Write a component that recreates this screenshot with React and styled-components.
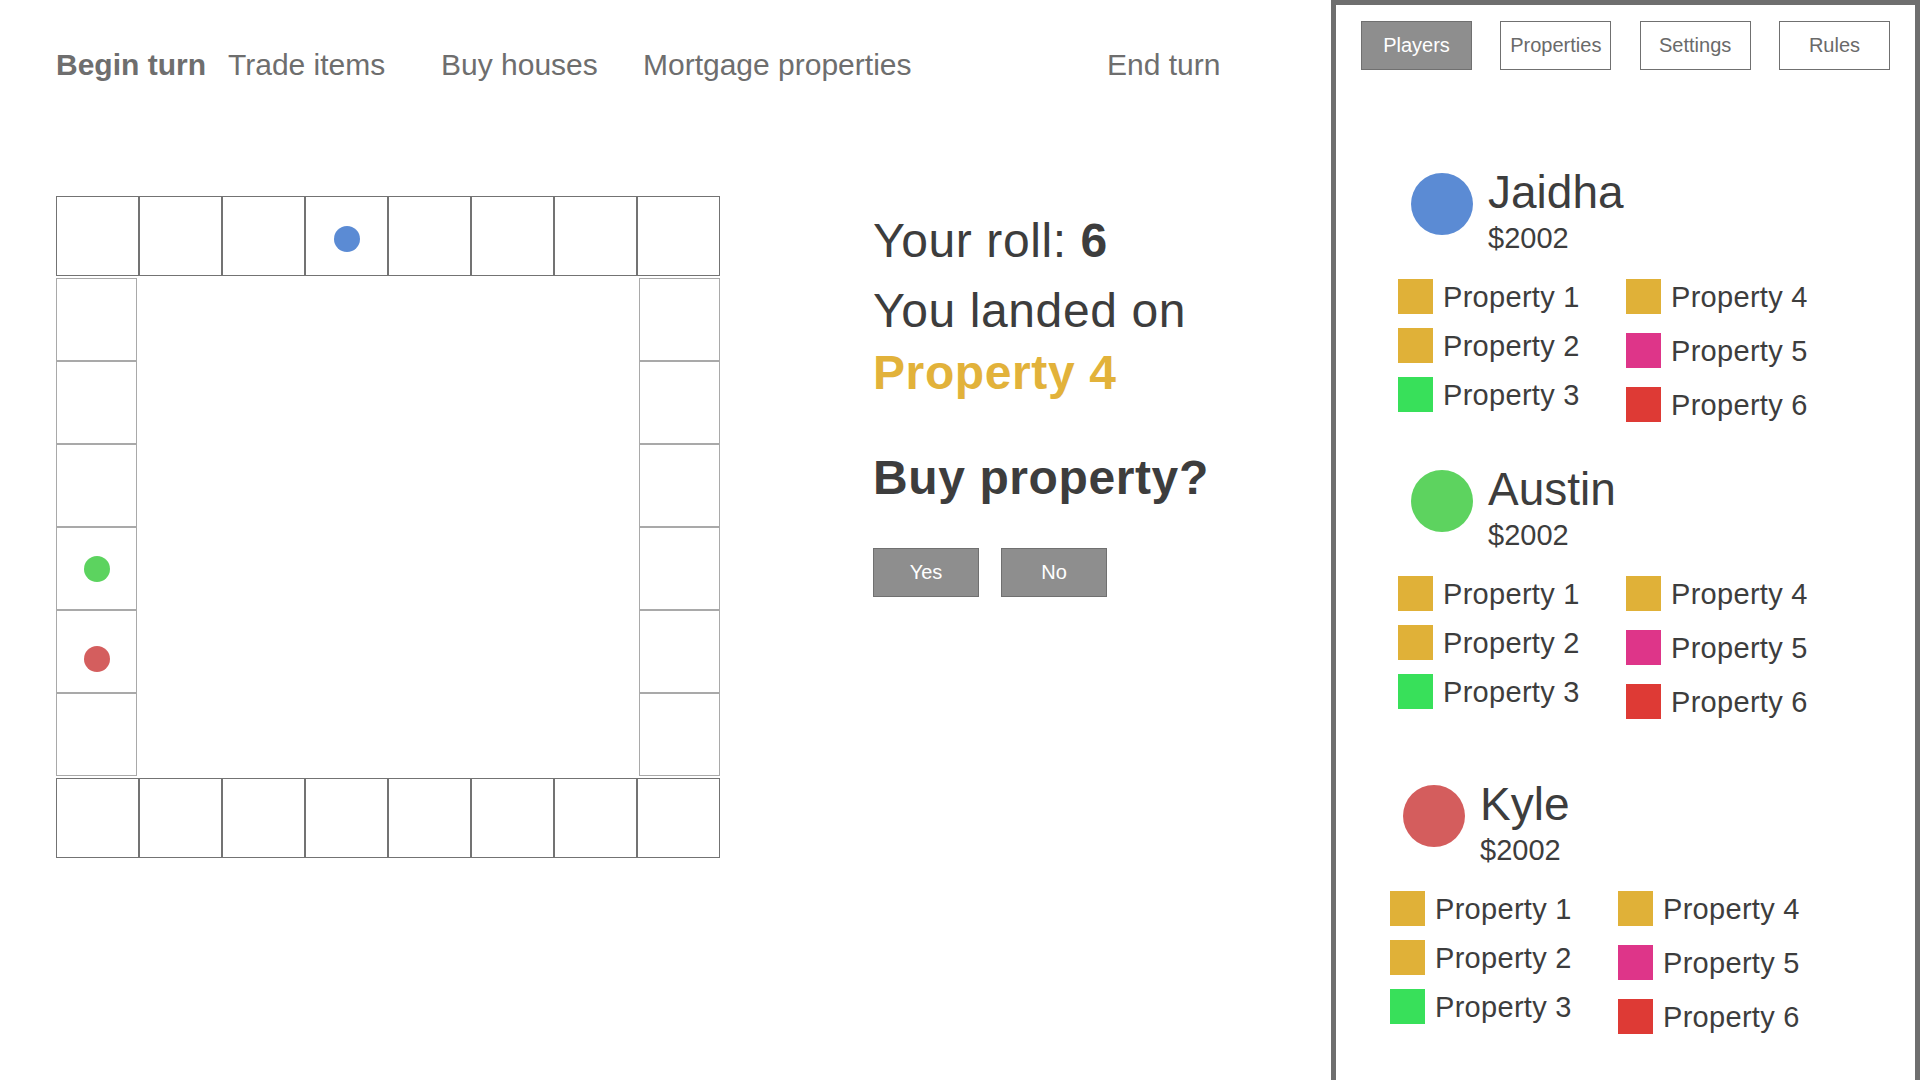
import React from 'react'
import styled, { createGlobalStyle } from 'styled-components'

const GlobalStyle = createGlobalStyle`
    html, body {
        margin: 0;
        padding: 0;
        overflow: hidden;
        background: #fff;
    }
    * {
        box-sizing: border-box;
    }
    body {
        font-family: 'Liberation Sans', Arial, sans-serif;
        color: #3d3d3d;
    }
`

const YELLOW = '#e0b138'
const PINK = '#de3589'
const GREEN = '#38e05a'
const RED = '#de3a35'

const navItems = [
    { label: 'Begin turn', bold: true },
    { label: 'Trade items' },
    { label: 'Buy houses' },
    { label: 'Mortgage properties' },
    { label: 'End turn' },
]

const tabs = ['Players', 'Properties', 'Settings', 'Rules']

const players = [
    { name: 'Jaidha', money: '$2002', color: '#5b8bd4' },
    { name: 'Austin', money: '$2002', color: '#5dd35f' },
    { name: 'Kyle', money: '$2002', color: '#d45d5d', shift: -8, extraTop: 18 },
]

const leftProps = [
    { label: 'Property 1', color: YELLOW },
    { label: 'Property 2', color: YELLOW },
    { label: 'Property 3', color: GREEN },
]

const rightProps = [
    { label: 'Property 4', color: YELLOW },
    { label: 'Property 5', color: PINK },
    { label: 'Property 6', color: RED },
]

// tokens on the board: strip -> cell index -> colour and a small vertical nudge
const tokens = {
    top: { 3: { color: '#5b8bd4', dy: 5 } },
    left: { 3: { color: '#5cd35f', dy: 0 }, 4: { color: '#d45e5e', dy: 14 } },
}

function Strip({ count, side, vertical }) {
    const list = Array.from({ length: count })
    const marks = tokens[side] || {}
    return (
        <StripStyled $vertical={vertical}>
            {list.map((_, i) => (
                <Cell key={i} $vertical={vertical}>
                    {marks[i] && <Token $color={marks[i].color} $dy={marks[i].dy} />}
                </Cell>
            ))}
        </StripStyled>
    )
}

function PlayerCard({ player }) {
    return (
        <PlayerStyled $shift={player.shift || 0} $extraTop={player.extraTop || 0}>
            <div className="head">
                <Avatar $color={player.color} />
                <div className="who">
                    <div className="name">{player.name}</div>
                    <div className="money">{player.money}</div>
                </div>
            </div>
            <div className="props">
                <PropColumn $gap={14} $width={228}>
                    {leftProps.map(p => (
                        <PropRow key={p.label}>
                            <Swatch $color={p.color} />
                            <span>{p.label}</span>
                        </PropRow>
                    ))}
                </PropColumn>
                <PropColumn $gap={19}>
                    {rightProps.map(p => (
                        <PropRow key={p.label}>
                            <Swatch $color={p.color} />
                            <span>{p.label}</span>
                        </PropRow>
                    ))}
                </PropColumn>
            </div>
        </PlayerStyled>
    )
}

function App() {
    return (
        <>
            <GlobalStyle />
            <Page>
                <Main>
                    <Nav>
                        {navItems.map(item => (
                            <NavItem key={item.label} $bold={item.bold}>{item.label}</NavItem>
                        ))}
                    </Nav>
                    <Content>
                        <Board>
                            <Strip count={8} side="top" />
                            <div className="middle">
                                <Strip count={6} side="left" vertical />
                                <Strip count={6} side="right" vertical />
                            </div>
                            <Strip count={8} side="bottom" />
                        </Board>
                        <Info>
                            <p className="roll">Your roll: <b>6</b></p>
                            <p className="landed">
                                You landed on<br />
                                <b className="place">Property 4</b>
                            </p>
                            <h2>Buy property?</h2>
                            <div className="actions">
                                <ActionButton>Yes</ActionButton>
                                <ActionButton>No</ActionButton>
                            </div>
                        </Info>
                    </Content>
                </Main>
                <Sidebar>
                    <Tabs>
                        {tabs.map((t, i) => (
                            <Tab key={t} $active={i === 0}>{t}</Tab>
                        ))}
                    </Tabs>
                    <PlayerList>
                        {players.map(p => <PlayerCard key={p.name} player={p} />)}
                    </PlayerList>
                </Sidebar>
            </Page>
        </>
    )
}

const Page = styled.div`
    display: flex;
    width: 1920px;
    height: 1080px;
`

const Main = styled.div`
    width: 1331px;
    flex-shrink: 0;
    padding-left: 56px;
`

const Nav = styled.nav`
    display: grid;
    grid-template-columns: 172px 213px 202px 464px auto;
    padding-top: 47px;
    height: 83px;
`

const NavItem = styled.div`
    font-size: 30px;
    line-height: 36px;
    color: #6e6e6e;
    font-weight: ${p => (p.$bold ? 700 : 400)};
    white-space: nowrap;
`

const Content = styled.div`
    display: flex;
    gap: 153px;
    margin-top: 113px;
`

const Board = styled.div`
    width: 664px;
    display: flex;
    flex-direction: column;
    gap: 2px;

    .middle {
        display: flex;
        justify-content: space-between;
    }
`

const StripStyled = styled.div`
    display: flex;
    flex-direction: ${p => (p.$vertical ? 'column' : 'row')};
`

const Cell = styled.div`
    width: ${p => (p.$vertical ? '81px' : '83px')};
    height: ${p => (p.$vertical ? '83px' : '80px')};
    border: 1px solid ${p => (p.$vertical ? '#a9a9a9' : '#737373')};
    display: flex;
    align-items: center;
    justify-content: center;
`

const Token = styled.span`
    width: 26px;
    height: 26px;
    border-radius: 50%;
    margin-top: ${p => p.$dy}px;
    background: ${p => p.$color};
`

const Info = styled.div`
    margin-top: 17px;
    font-size: 48px;
    letter-spacing: 0.6px;
    color: #3d3d3d;

    p {
        margin: 0;
    }

    .roll {
        line-height: 55px;
    }

    .landed {
        margin-top: 12px;
        line-height: 62px;
    }

    .place {
        color: #e2b23a;
    }

    h2 {
        margin: 46px 0 0;
        font-size: 48px;
        line-height: 55px;
        font-weight: 700;
    }

    .actions {
        display: flex;
        gap: 22px;
        margin-top: 43px;
    }
`

const ActionButton = styled.button`
    width: 106px;
    height: 49px;
    background: #8e8e8e;
    border: 1px solid #707070;
    color: #fff;
    font-family: inherit;
    font-size: 20px;
    letter-spacing: 0;
    padding: 0;
    cursor: pointer;
`

const Sidebar = styled.aside`
    flex: 1;
    height: 1080px;
    border: 5px solid #6f6f6f;
    border-bottom: none;
    padding: 16px 25px 0;
`

const Tabs = styled.div`
    display: flex;
    justify-content: space-between;
`

const Tab = styled.button`
    width: 111px;
    height: 49px;
    padding: 0;
    font-family: inherit;
    font-size: 20px;
    border: 1px solid #707070;
    background: ${p => (p.$active ? '#8e8e8e' : '#fff')};
    color: ${p => (p.$active ? '#fff' : '#6a6a6a')};
    cursor: pointer;
`

const PlayerList = styled.div`
    display: flex;
    flex-direction: column;
    gap: 40px;
    margin-top: 95px;
    padding-left: 37px;
`

const PlayerStyled = styled.div`
    margin-left: ${p => p.$shift}px;
    margin-top: ${p => p.$extraTop}px;

    .head {
        display: flex;
        align-items: flex-start;
        gap: 15px;
        padding-left: 13px;
    }

    .who {
        color: #3d3d3d;
    }

    .name {
        font-size: 46px;
        line-height: 54px;
    }

    .money {
        font-size: 29px;
        line-height: 38px;
    }

    .props {
        display: flex;
        margin-top: 22px;
    }
`

const Avatar = styled.span`
    width: 62px;
    height: 62px;
    margin-top: 8px;
    border-radius: 50%;
    flex-shrink: 0;
    background: ${p => p.$color};
`

const PropColumn = styled.div`
    display: flex;
    flex-direction: column;
    gap: ${p => p.$gap}px;
    width: ${p => (p.$width ? `${p.$width}px` : 'auto')};
`

const PropRow = styled.div`
    display: flex;
    align-items: flex-start;
    gap: 10px;
    height: 35px;
    font-size: 29px;
    line-height: 37px;
    letter-spacing: 0.3px;
    color: #3d3d3d;
`

const Swatch = styled.span`
    width: 35px;
    height: 35px;
    flex-shrink: 0;
    background: ${p => p.$color};
`

export default App
